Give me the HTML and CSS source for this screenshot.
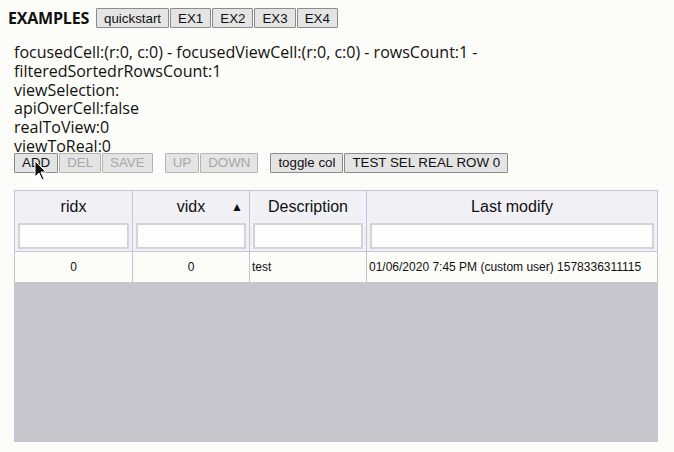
FILE: index.html
```html
<!DOCTYPE html>
<html>
<head>
<meta charset="utf-8">
<link rel="stylesheet" href="styles.css">
</head>
<body>
<div class="topbar">
  <span class="title">EXAMPLES</span>
  <div class="btn-group">
    <button class="btn">quickstart</button><button class="btn">EX1</button><button class="btn">EX2</button><button class="btn">EX3</button><button class="btn">EX4</button>
  </div>
</div>
<div class="main">
  <div class="info">
    <div>focusedCell:(r:0, c:0) - focusedViewCell:(r:0, c:0) - rowsCount:1 -<br>filteredSortedrRowsCount:1</div>
    <div>viewSelection:</div>
    <div>apiOverCell:false</div>
    <div>realToView:0</div>
    <div>viewToReal:0</div>
  </div>
  <div class="actions">
    <div class="btn-group">
      <button class="btn">ADD</button><button class="btn" disabled>DEL</button><button class="btn" disabled>SAVE</button>
    </div>
    <div class="btn-group">
      <button class="btn" disabled>UP</button><button class="btn" disabled>DOWN</button>
    </div>
    <div class="btn-group">
      <button class="btn">toggle col</button><button class="btn">TEST SEL REAL ROW 0</button>
    </div>
    <svg class="cursor" width="14" height="22" viewBox="0 0 14 22"><path d="M1 1 L1 17 L5 13 L8 20 L10 19 L7 12 L12 12 Z" fill="#111" stroke="#fff" stroke-width="1"/></svg>
  </div>
  <div class="grid">
    <div class="grid-head">
      <div class="hcell"><div class="htitle">ridx</div><input class="filter"></div>
      <div class="hcell"><div class="htitle">vidx<span class="sort">▲</span></div><input class="filter"></div>
      <div class="hcell"><div class="htitle">Description</div><input class="filter"></div>
      <div class="hcell"><div class="htitle">Last modify</div><input class="filter"></div>
    </div>
    <div class="grid-row">
      <div class="cell center">0</div>
      <div class="cell center">0</div>
      <div class="cell">test</div>
      <div class="cell">01/06/2020 7:45 PM (custom user) 1578336311115</div>
    </div>
    <div class="grid-empty"></div>
  </div>
</div>
</body>
</html>
```
FILE: styles.css
```css
html, body { height: 100%; }
body {
  margin: 8px;
  background: #fcfcf8;
  font-family: "Open Sans", sans-serif;
  color: #111;
}
.topbar {
  display: flex;
  align-items: center;
  gap: 7px;
  height: 20px;
}
.title {
  font-family: "Open Sans", sans-serif;
  font-weight: 700;
  font-size: 16px;
  letter-spacing: -0.2px;
}
.btn-group { display: flex; }
.btn {
  font-family: "Liberation Sans", sans-serif;
  font-size: 13.33px;
  height: 20px;
  padding: 0 7px;
  margin: 0 1px 0 0;
  background: #e4e4e4;
  border: 1px solid #8c8c8c;
  border-radius: 1px;
  color: #111;
}
.btn:disabled { color: #a8a8a8; border-color: #b4b4b4; }
.main {
  padding: 15px 0 0 6px;
}
.info {
  font-size: 16px;
  line-height: 18.8px;
}
.actions {
  position: relative;
  display: flex;
  gap: 11px;
  margin-top: -3px;
}
.cursor {
  position: absolute;
  left: 20px;
  top: 7px;
}
.grid {
  margin-top: 17px;
  width: 644px;
  height: 252px;
  border: 1px solid #c4c4d8;
  display: flex;
  flex-direction: column;
  box-sizing: border-box;
}
.grid-head, .grid-row {
  display: grid;
  grid-template-columns: 118px 117px 117px 1fr;
}
.grid-head { background: #f0f0f5; border-bottom: 1px solid #c4c4d8; }
.hcell {
  border-right: 1px solid #c4c4d8;
  display: flex;
  flex-direction: column;
  padding: 0 3px 2px;
}
.hcell:last-child { border-right: none; }
.htitle {
  position: relative;
  font-family: "Liberation Sans", sans-serif;
  font-size: 16px;
  height: 32px;
  line-height: 32px;
  text-align: center;
}
.sort {
  position: absolute;
  right: 3px;
  top: 0;
  font-size: 12px;
}
.filter {
  height: 26px;
  box-sizing: border-box;
  border: 2px solid #d4d4d8;
  background: #fdfdfb;
  margin: 0;
}
.grid-row { background: #fcfcf8; }
.cell {
  font-family: "Liberation Sans", sans-serif;
  font-size: 12px;
  height: 30px;
  line-height: 30px;
  padding: 0 2px;
  border-right: 1px solid #c4c4d8;
  white-space: nowrap;
}
.cell:last-child { border-right: none; }
.center { text-align: center; }
.grid-empty { flex: 1; background: #c6c6cc; }
```
